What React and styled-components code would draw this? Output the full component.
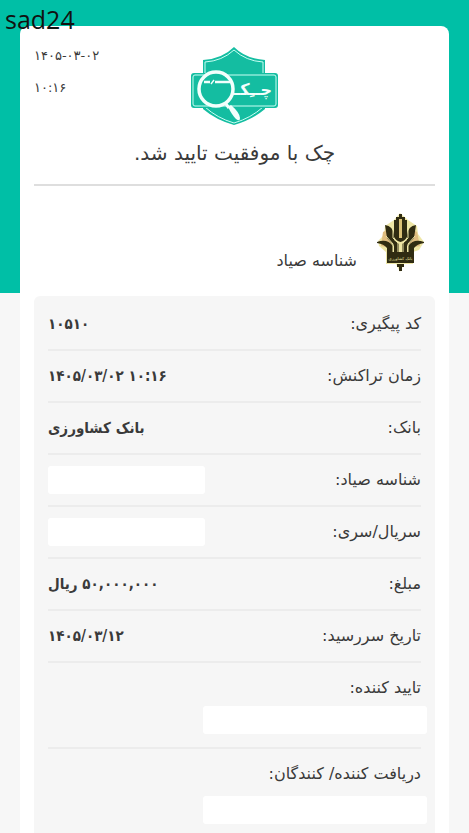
import React from 'react';
import styled, { createGlobalStyle } from 'styled-components';

const rows = [
  { id: 1, label: 'کد پیگیری:', value: '۱۰۵۱۰', dir: 'ltr' },
  { id: 2, label: 'زمان تراکنش:', value: '۱۴۰۵/۰۳/۰۲ ۱۰:۱۶', dir: 'ltr' },
  { id: 3, label: 'بانک:', value: 'بانک کشاورزی' },
  { id: 4, label: 'شناسه صیاد:' },
  { id: 5, label: 'سریال/سری:' },
  { id: 6, label: 'مبلغ:', value: '۵۰,۰۰۰,۰۰۰ ریال' },
  { id: 7, label: 'تاریخ سررسید:', value: '۱۴۰۵/۰۳/۱۲', dir: 'ltr' },
  { id: 8, label: 'تایید کننده:', stacked: true },
  { id: 9, label: 'دریافت کننده/ کنندگان:', stacked: true },
];

function App() {
  return (
    <Page dir="rtl" lang="fa">
      <GlobalStyle />
      <Watermark dir="ltr">sad24</Watermark>
      <Card>
        <Header>
          <span />
          <ChequeLogo />
          <Stamp dir="ltr">
            <span>۱۴۰۵-۰۳-۰۲</span>
            <span>۱۰:۱۶</span>
          </Stamp>
        </Header>
        <Title>چک با موفقیت تایید شد.</Title>
        <Bank>
          <BankLogo />
          <BankLabel>شناسه صیاد</BankLabel>
        </Bank>
        <Details>
          {rows.map((row) => (
            <Row key={row.id} $stacked={row.stacked}>
              <Label>{row.label}</Label>
              {row.value ? (
                <Value dir={row.dir}>{row.value}</Value>
              ) : (
                <Blank $wide={row.stacked} />
              )}
            </Row>
          ))}
        </Details>
      </Card>
    </Page>
  );
}

function ChequeLogo() {
  return (
    <svg width="88" height="80" viewBox="11 10 88 80" aria-hidden="true">
      <path
        d="M54 11 Q66 23 85 24 V73 Q72 84 54 89 Q36 84 23 73 V24 Q42 23 54 11Z"
        fill="#14bda1"
      />
      <path
        d="M54 14 Q66 25 83 26 V71 Q71 82 54 87 Q37 82 25 71 V26 Q42 25 54 14Z"
        fill="none"
        stroke="#c9fff3"
        strokeWidth="1"
      />
      <rect x="11" y="37" width="87" height="35" rx="3" fill="#14bda1" />
      <rect x="13" y="39" width="83" height="31" rx="2" fill="none" stroke="#c9fff3" strokeWidth="1" />
      <LogoText x="92" y="59" direction="rtl">چــِکــ</LogoText>
      <circle cx="36" cy="53" r="17" fill="#14bda1" stroke="#f2fffc" strokeWidth="3.5" />
      <path d="M24 46H30M35 46H51" stroke="#f2fffc" strokeWidth="2.6" />
      <path d="M31 48L34 44" stroke="#f2fffc" strokeWidth="1.4" />
      <path d="M46 68L49 72" stroke="#f2fffc" strokeWidth="3" />
      <path d="M48 71L51 69Q60 77 60 82Q60 86 56 83Q52 79 48 71Z" fill="#f2fffc" />
    </svg>
  );
}

function BankLogo() {
  return (
    <svg width="48" height="60" viewBox="12 13 48 60" aria-hidden="true">
      <path
        d="M35 13L43 20L52 26L53 34L59 42L54 50L48 52V64H39L35 72L31 64H21V52L14 46L13 41L19 35L20 26L29 20Z"
        fill="#eee6a5"
      />
      <path d="M18 32L26 28V48L16 46ZM52 32L45 28V48L55 46Z" fill="#dfbd80" />
      <g fill="#302c12">
        <path d="M34 14H37V17H40V20H42V37Q40 41 35.5 42Q31 41 29 37V20H31V17H34Z" />
        <path d="M20 25Q28 26 29 35V40L34 44V52H29V46L22 38Z" />
        <path d="M51 25Q43 26 42 35V40L37 44V52H42V46L49 38Z" />
        <path d="M12 42Q22 38 28 46V52H22V48Q19 44 12 43Z" />
        <path d="M59 42Q49 38 43 46V52H49V48Q52 44 59 43Z" />
        <rect x="22" y="52" width="27" height="11" />
        <path d="M32 64H39V67H37V71H34V67H32Z" />
      </g>
      <path d="M35.5 19V38" stroke="#dac176" strokeWidth="3" />
      <path
        d="M28 27V38L33 43V52M43 27V38L38 43V52M21 36L28 44V52M50 36L43 44V52"
        fill="none"
        stroke="#eee6a5"
        strokeWidth="1"
      />
      <BankMark x="35.5" y="60" textAnchor="middle">بانک کشاورزی</BankMark>
    </svg>
  );
}

const GlobalStyle = createGlobalStyle`
  * {
    box-sizing: border-box;
  }

  body {
    margin: 0;
    background: #f7f7f7;
    color: #3a3a3a;
    font-family: "DejaVu Sans", sans-serif;
  }
`;

const Page = styled.main`
  position: relative;
  display: flex;
  flex-direction: column;
  min-height: 100vh;
  padding: 26px 20px 0;
  background: linear-gradient(#00bfa6, #00bfa6) top / 100% 293px no-repeat;
`;

const Watermark = styled.div`
  position: absolute;
  top: 2px;
  left: 5px;
  color: #111;
  font: 25px/34px "Open Sans", sans-serif;
`;

const Card = styled.section`
  flex: 1;
  display: flex;
  flex-direction: column;
  padding: 20px 14px 0;
  border-radius: 8px 8px 0 0;
  background: #fff;
`;

const Header = styled.header`
  display: grid;
  grid-template-columns: 1fr auto 1fr;
`;

const Stamp = styled.div`
  display: flex;
  flex-direction: column;
  gap: 12px;
  font-size: 13px;
  line-height: 20px;
`;

const Title = styled.h1`
  margin: 0;
  padding: 12px 0 16px;
  border-bottom: 2px solid #dedede;
  text-align: center;
  font-size: 20px;
  font-weight: 400;
  line-height: 30px;
`;

const Bank = styled.div`
  display: flex;
  align-items: flex-end;
  gap: 20px;
  padding: 27px 10px 23px;
`;

const BankLabel = styled.span`
  font-size: 16px;
  line-height: 24px;
`;

const Details = styled.dl`
  flex: 1;
  margin: 0;
  padding: 3px 14px 0;
  border-radius: 6px 6px 0 0;
  background: #f6f6f6;
`;

const Row = styled.div`
  display: flex;
  flex-direction: ${(props) => (props.$stacked ? 'column' : 'row')};
  align-items: ${(props) => (props.$stacked ? 'flex-start' : 'center')};
  justify-content: space-between;
  min-height: ${(props) => (props.$stacked ? '86px' : '52px')};
  padding: ${(props) => (props.$stacked ? '13px 0 13px' : '0')};
  border-bottom: 2px solid #ececec;

  &:last-child {
    min-height: 84px;
    padding-bottom: 9px;
    border-bottom: none;
  }
`;

const Label = styled.dt`
  font-size: 16px;
  line-height: 24px;
`;

const Value = styled.dd`
  margin: 0;
  font: bold 15px/24px "DejaVu Sans Condensed", "DejaVu Sans", sans-serif;
`;

const Blank = styled.dd`
  width: ${(props) => (props.$wide ? '60%' : '42%')};
  height: 28px;
  margin: 0;
  margin-inline-start: ${(props) => (props.$wide ? '-6px' : '0')};
  border-radius: 3px;
  background: #fff;
`;

const LogoText = styled.text`
  fill: #f2fffc;
  font: bold 16px "DejaVu Sans", sans-serif;
`;

const BankMark = styled.text`
  fill: #eee6a5;
  font: 4px "DejaVu Sans", sans-serif;
`;

export default App;
